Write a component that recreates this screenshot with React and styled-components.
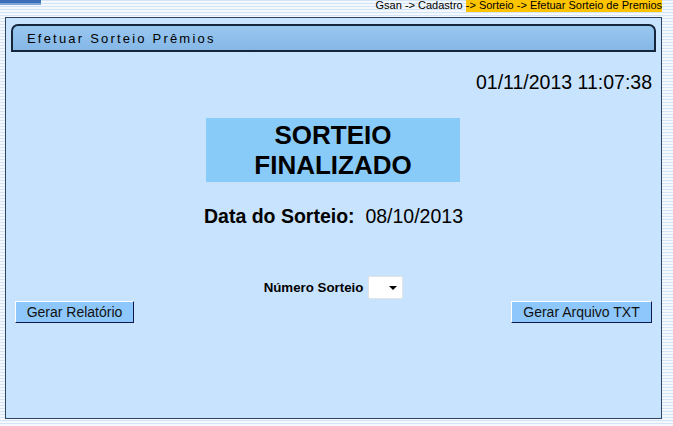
import React from "react";
import styled, { createGlobalStyle } from "styled-components";

const Global = createGlobalStyle`
  html, body { margin: 0; padding: 0; }
  body { font-family: "Liberation Sans", Arial, sans-serif; }
`;

const Page = styled.div`
  width: 673px;
  height: 426px;
  overflow: hidden;
  background: repeating-linear-gradient(
    to bottom,
    #d3e4f6 0px,
    #d3e4f6 1px,
    #f4f8fd 1px,
    #f4f8fd 3px
  );
`;

const TopBar = styled.div`
  height: 17px;
  display: flex;
  align-items: flex-start;
  justify-content: space-between;
`;

const Logo = styled.div`
  width: 41px;
  height: 5px;
  background: linear-gradient(to bottom, #3d6fb8 0 3px, #7fa6d8 3px 5px);
`;

const Breadcrumb = styled.div`
  font-size: 11px;
  line-height: 11px;
  color: #000;
  margin-right: 11px;
  white-space: nowrap;
`;

const Highlight = styled.span`
  background: #ffc400;
  padding-bottom: 1px;
`;

const Panel = styled.div`
  margin-left: 5px;
  width: 657px;
  height: 402px;
  border: 1px solid #2b4563;
  background: #c8e3fd;
  padding: 6px 5px 0 5px;
  box-sizing: border-box;
  display: flex;
  flex-direction: column;
`;

const TitleBar = styled.div`
  height: 28px;
  box-sizing: border-box;
  border: 2px solid #15253a;
  border-radius: 7px 7px 0 0;
  background: linear-gradient(to bottom, #98c7f0, #86b8e6);
  display: flex;
  align-items: center;
  padding-left: 14px;
  font-size: 13px;
  letter-spacing: 2.2px;
  color: #000;
`;

const DateTime = styled.div`
  text-align: right;
  font-size: 19.5px;
  margin-top: 19px;
  padding-right: 4px;
  line-height: 22px;
`;

const Center = styled.div`
  display: flex;
  flex-direction: column;
  align-items: center;
`;

const StatusBox = styled.div`
  margin-top: 25px;
  width: 254px;
  height: 64px;
  background: #88cbf9;
  display: flex;
  align-items: center;
  justify-content: center;
  text-align: center;
  font-weight: bold;
  font-size: 26px;
  line-height: 30px;
  color: #000;
  margin-right: 1px;
`;

const DateRow = styled.div`
  margin-top: 23px;
  font-size: 19.5px;
  line-height: 22px;
  white-space: pre;
`;

const Bold = styled.span`
  font-weight: bold;
`;

const NumberRow = styled.div`
  margin-top: 49px;
  display: flex;
  align-items: center;
  gap: 5px;
  font-size: 13.3px;
  font-weight: bold;
`;

const Select = styled.div`
  width: 35px;
  height: 23px;
  box-sizing: border-box;
  background: #fff;
  border: 1px solid #e3e3e3;
  border-radius: 2px;
  display: flex;
  align-items: center;
  justify-content: flex-end;
  padding-right: 5px;
`;

const Caret = styled.div`
  width: 0;
  height: 0;
  border-left: 4px solid transparent;
  border-right: 4px solid transparent;
  border-top: 4px solid #000;
`;

const ButtonRow = styled.div`
  display: flex;
  justify-content: space-between;
  margin-top: 2px;
  padding: 0 4px 0 4px;
`;

const Button = styled.button`
  height: 22px;
  box-sizing: border-box;
  background: #8dc7fb;
  border: 1px solid;
  border-color: #ffffff #0e1a4a #0e1a4a #ffffff;
  font-family: "Liberation Sans", Arial, sans-serif;
  font-size: 14px;
  color: #111;
  padding: 0;
  width: ${(p) => p.$w}px;
  cursor: pointer;
`;

export default function App() {
  return (
    <>
      <Global />
      <Page>
        <TopBar>
          <Logo />
          <Breadcrumb>
            Gsan -&gt; Cadastro <Highlight>-&gt; Sorteio -&gt; Efetuar Sorteio de Premios</Highlight>
          </Breadcrumb>
        </TopBar>
        <Panel>
          <TitleBar>Efetuar Sorteio Prêmios</TitleBar>
          <DateTime>01/11/2013 11:07:38</DateTime>
          <Center>
            <StatusBox>
              SORTEIO
              <br />
              FINALIZADO
            </StatusBox>
            <DateRow>
              <Bold>Data do Sorteio:</Bold>{"  "}08/10/2013
            </DateRow>
            <NumberRow>
              <span>Número Sorteio</span>
              <Select>
                <Caret />
              </Select>
            </NumberRow>
          </Center>
          <ButtonRow>
            <Button $w={119}>Gerar Relatório</Button>
            <Button $w={141}>Gerar Arquivo TXT</Button>
          </ButtonRow>
        </Panel>
      </Page>
    </>
  );
}
